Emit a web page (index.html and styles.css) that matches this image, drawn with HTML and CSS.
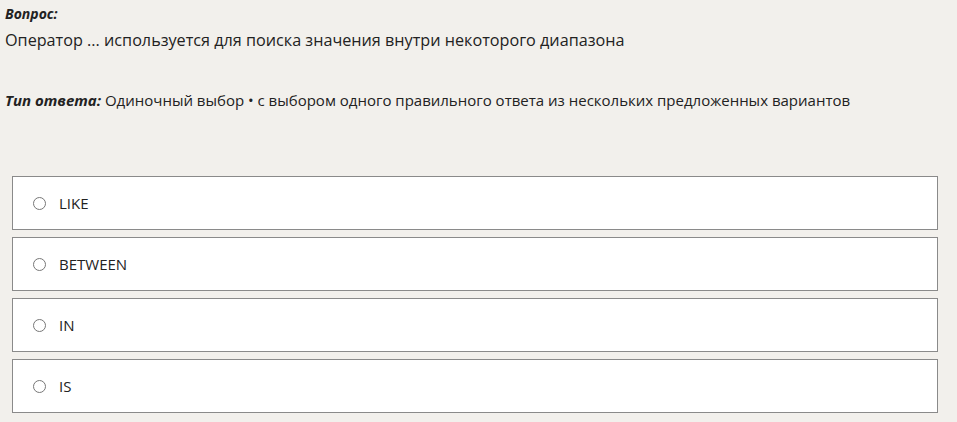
FILE: index.html
```html
<!DOCTYPE html>
<html lang="ru">
<head>
	<meta charset="UTF-8">
	<title>Вопрос</title>
	<link rel="stylesheet" href="styles.css">
</head>
<body>
	<div id="question">
		<div class="label">Вопрос:</div>
		<div class="text">Оператор ... используется для поиска значения внутри некоторого диапазона</div>
	</div>
	<div id="type">
		<b>Тип ответа:</b> Одиночный выбор • с выбором одного правильного ответа из нескольких предложенных вариантов
	</div>
	<form id="answers">
		<label class="option"><input type="radio" name="answer"><i></i><span>LIKE</span></label>
		<label class="option"><input type="radio" name="answer"><i></i><span>BETWEEN</span></label>
		<label class="option"><input type="radio" name="answer"><i></i><span>IN</span></label>
		<label class="option"><input type="radio" name="answer"><i></i><span>IS</span></label>
	</form>
</body>
</html>
```

FILE: styles.css
```css
body {
	margin: 0;
	padding: 4px 0 0 5px;
	background-color: #f2f0ec;
	color: #222;
	font-size: 14px;
	font-family: "Open Sans", "Noto Sans", sans-serif;
}

/*вопрос*/
#question .label {
	font-weight: bold;
	font-style: italic;
	line-height: 20px;
}
#question .text {
	margin-top: 6px;
	font-size: 16.2px;
	line-height: 20px;
}

/*тип ответа*/
#type {
	margin-top: 40px;
	font-size: 15px;
	line-height: 20px;
}
#type b {
	font-size: 15px;
	font-style: italic;
}

/*варианты*/
#answers {
	display: flex;
	flex-direction: column;
	gap: 7px;
	width: 926px;
	margin: 66px 0 0 7px;
}
.option {
	display: flex;
	align-items: center;
	height: 52px;
	padding-left: 20px;
	border: 1px solid #8a8a8a;
	background-color: #fff;
	font-size: 15px;
	cursor: pointer;
}
.option input {
	display: none;
}
.option i {
	flex-shrink: 0;
	box-sizing: border-box;
	width: 13px;
	height: 13px;
	border: 1.5px solid #777;
	border-radius: 50%;
	margin-right: 13px;
}
```
